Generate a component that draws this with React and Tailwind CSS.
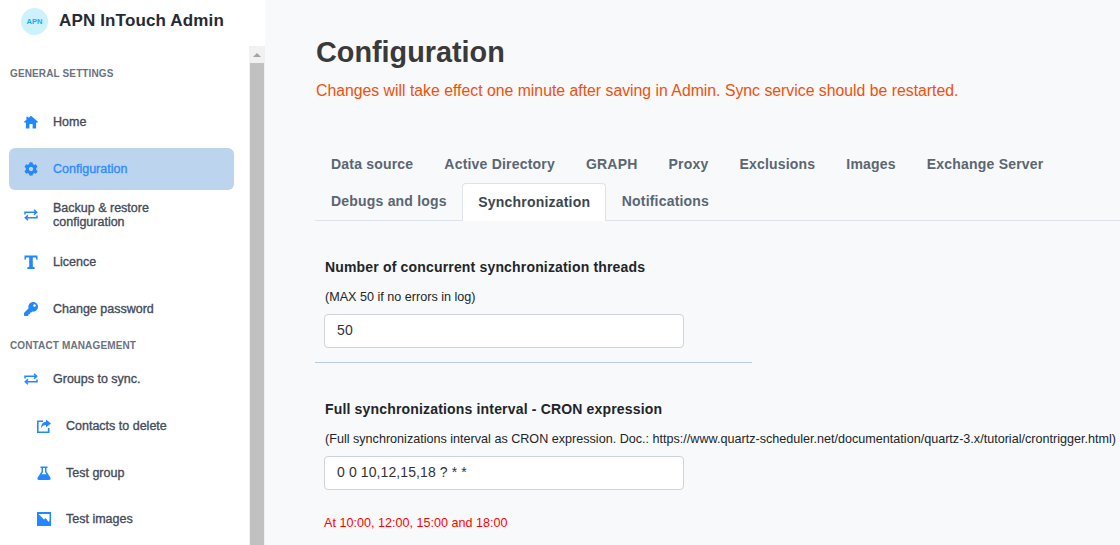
import React from "react";
import { FaCog, FaKey } from "react-icons/fa";

const HomeIcon = ({ className }) => (
  <svg viewBox="0 0 14 14" className={className} fill="currentColor">
    <path d="M7 .800l7 6-1 1.100-.9-.7V13.500H8.600V9H5.400v4.500H1.900V7.200L1 7.900 0 6.800l2.400-2V1.800h2v1.300z" />
  </svg>
);

const SwapIcon = ({ className }) => (
  <svg viewBox="0 0 14 14" className={className} fill="none" stroke="currentColor" strokeWidth="1.500">
    <path d="M1 6.500V4.200h11.500M10 1.800l2.700 2.400L10 6.600" />
    <path d="M13 7.500v2.300H1.500M4 7.400L1.300 9.800 4 12.200" />
  </svg>
);

const TIcon = ({ className }) => (
  <svg viewBox="0 0 14 14" className={className} fill="currentColor">
    <path d="M0.500 0.500h13v4.200h-1.100l-.6-2.300H8.800v9.300l1.800.5V14H3.400v-1.800l1.800-.5V2.400H2.200l-.6 2.300H.500z" />
  </svg>
);

const ShareIcon = ({ className }) => (
  <svg viewBox="0 0 14 14" className={className} fill="none" stroke="currentColor" strokeWidth="1.600">
    <path d="M6 2.300H.8v10.900h10.900V9" />
    <path fill="currentColor" stroke="none" d="M9 .500l5 3.900-5 3.900V6C6.500 6 5 7 4.200 9.500 3.900 5.500 5.800 3 9 2.800z" />
  </svg>
);

const FlaskIcon = ({ className }) => (
  <svg viewBox="0 0 14 14" className={className} fill="currentColor">
    <path fillRule="evenodd" d="M3.500.500h7v1.500H9.500v3.600l3.900 6.100c.6 1 0 2.300-1.300 2.300H1.900c-1.300 0-1.900-1.300-1.300-2.300l3.900-6.100V2h-1zM6 2v4L4.600 8.300h4.800L8 6V2z" />
  </svg>
);

const ImgIcon = ({ className }) => (
  <svg viewBox="0 0 14 14" className={className} fill="currentColor">
    <path fillRule="evenodd" d="M0 0h14v14H0zM1.500 2l5.500 5.500 1.500-1.500 3 3.700 1-.7V2z" />
  </svg>
);

const Item = ({ icon: Icon, active, sub, children }) => (
  <div className={`flex h-[42px] w-[225px] shrink-0 items-center rounded-md ${sub ? "pl-[28px]" : "pl-[15px]"} ${active ? "bg-[#bdd4ee] text-[#2f8cff]" : "text-[#444c5a]"}`}>
    <Icon className="h-[14px] w-[14px] shrink-0 text-[#2288ff]" />
    <span className="ml-[15px] text-[12.500px] leading-[14px] [-webkit-text-stroke:0.35px_currentColor]">{children}</span>
  </div>
);

const Section = ({ className, children }) => (
  <div className={`pl-px text-[10px] font-bold uppercase leading-3 tracking-[0.13px] text-[#6b7280] ${className}`}>{children}</div>
);

const Tab = ({ active, children }) => (
  <div className={`flex h-[37px] items-center text-[14px] font-bold tracking-[0.2px] ${active ? "-mb-px h-[38px] rounded-t-[4px] border border-b-0 border-[#dee2ea] bg-white px-[15px] text-[#3b4650]" : "px-[15.500px] text-[#5a6672]"}`}>{children}</div>
);

const Field = ({ label, help, value }) => (
  <div>
    <div className="pl-px text-[14px] font-bold leading-5 tracking-[0.17px] text-[#212529]">{label}</div>
    <div className="mt-[11px] whitespace-nowrap pl-px text-[12.600px] leading-[18px] text-[#212529]">{help}</div>
    <div className="mt-[8px] flex h-[34px] w-[360px] items-center rounded-[4px] border border-[#ced4da] bg-white px-3 pb-[2px] text-[14px] tracking-[0.1px] text-[#333]">{value}</div>
  </div>
);

export default function App() {
  return (
    <div className="flex h-[545px] w-[1120px] overflow-hidden bg-[#f8f9fb] font-['Liberation_Sans',Arial,sans-serif]">
      <aside className="flex w-[265px] shrink-0 flex-col bg-white">
        <div className="flex h-[43px] items-center pl-[21px]">
          <div className="flex h-[27px] w-[27px] items-center justify-center rounded-full bg-[#cdf2fe] text-[7.500px] font-bold text-[#1fa9f0]">APN</div>
          <div className="mb-[2px] ml-[11px] text-[17px] font-bold tracking-[0.15px] text-[#262b33]">APN InTouch Admin</div>
        </div>
        <div className="mt-[3px] flex min-h-0 flex-1">
          <div className="flex min-w-0 flex-1 flex-col pl-[9px]">
            <Section className="mt-[22px]">General settings</Section>
            <div className="mt-[21px] flex flex-col gap-[4.700px]">
              <Item icon={HomeIcon}>Home</Item>
              <Item icon={FaCog} active>Configuration</Item>
              <Item icon={SwapIcon}>Backup &amp; restore<br />configuration</Item>
              <Item icon={TIcon}>Licence</Item>
              <Item icon={FaKey}>Change password</Item>
            </div>
            <Section className="mt-[10px]">Contact management</Section>
            <div className="mt-[6.400px] flex flex-col gap-[4.700px]">
              <Item icon={SwapIcon}>Groups to sync.</Item>
              <Item icon={ShareIcon} sub>Contacts to delete</Item>
              <Item icon={FlaskIcon} sub>Test group</Item>
              <Item icon={ImgIcon} sub>Test images</Item>
            </div>
          </div>
          <div className="flex w-[16px] shrink-0 flex-col items-center bg-[#f1f1f1] pr-px">
            <div className="flex h-[17px] w-full items-center justify-center">
              <div className="h-0 w-0 border-x-[4px] border-b-[4px] border-x-transparent border-b-[#a3a3a3]" />
            </div>
            <div className="w-[14px] flex-1 bg-[#c1c1c1]" />
          </div>
        </div>
      </aside>
      <main className="min-w-0 flex-1 pl-[50px]">
        <h1 className="mt-[34px] pl-px text-[28.800px] font-bold leading-9 text-[#3a3a3a]">Configuration</h1>
        <p className="mt-[11px] pl-px text-[15.800px] leading-5 text-[#f2500a]">Changes will take effect one minute after saving in Admin. Sync service should be restarted.</p>
        <div className="mt-[45px] border-b border-[#dee2ea]">
          <div className="flex pl-[0.500px]"><Tab>Data source</Tab><Tab>Active Directory</Tab><Tab>GRAPH</Tab><Tab>Proxy</Tab><Tab>Exclusions</Tab><Tab>Images</Tab><Tab>Exchange Server</Tab></div>
          <div className="flex pl-[0.500px]"><Tab>Debugs and logs</Tab><Tab active>Synchronization</Tab><Tab>Notifications</Tab></div>
        </div>
        <div className="pt-[36px]">
          <div className="pl-[9px]">
            <Field label="Number of concurrent synchronization threads" help="(MAX 50 if no errors in log)" value="50" />
          </div>
          <div className="mt-[14px] h-px w-[437px] bg-[#bccbdb]" />
          <div className="mt-[36px] pl-[9px]">
            <Field label="Full synchronizations interval - CRON expression" help="(Full synchronizations interval as CRON expression. Doc.: https://www.quartz-scheduler.net/documentation/quartz-3.x/tutorial/crontrigger.html)" value="0 0 10,12,15,18 ? * *" />
            <div className="mt-[25px] text-[12.600px] leading-4 text-[#ff0000]">At 10:00, 12:00, 15:00 and 18:00</div>
          </div>
        </div>
      </main>
    </div>
  );
}
